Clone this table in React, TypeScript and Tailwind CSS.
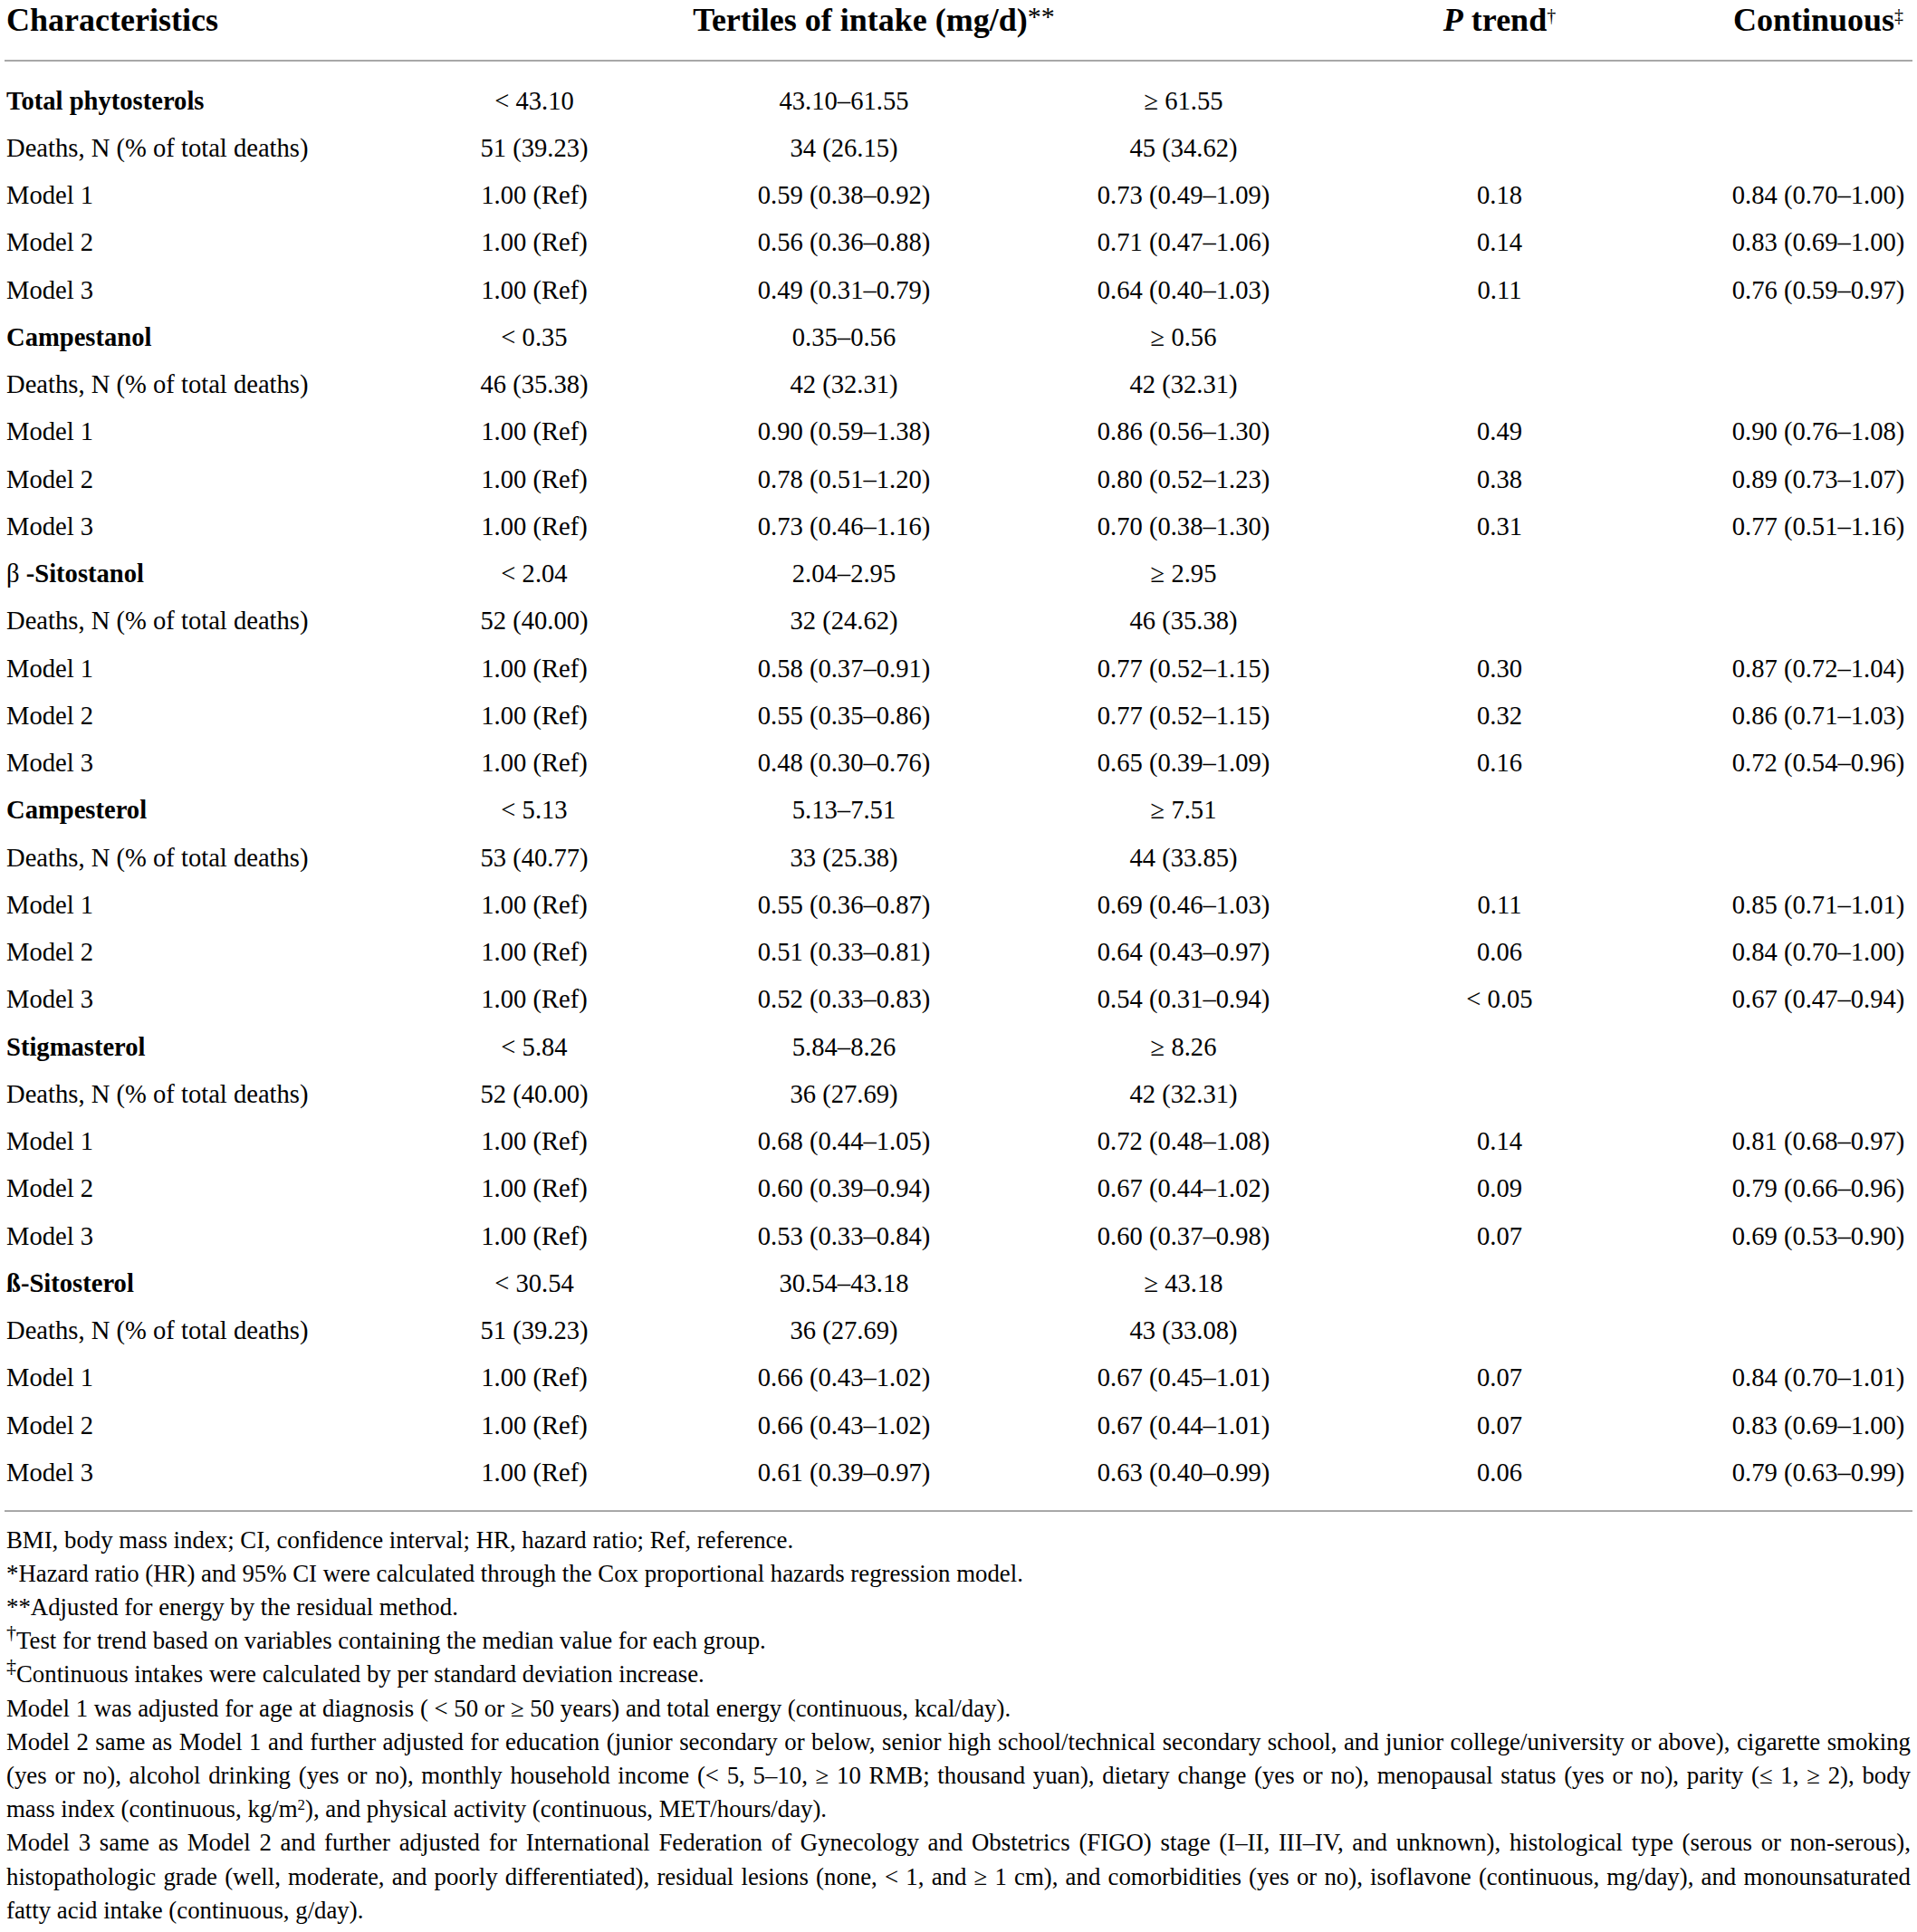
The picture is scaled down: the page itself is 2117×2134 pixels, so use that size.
import React from "react";

type Row = { label: React.ReactNode; bold?: boolean; cells: string[] };

const groups: { name: React.ReactNode; ranges: string[]; deaths: string[]; models: string[][] }[] = [
  {
    name: <span className="font-bold">Total phytosterols</span>,
    ranges: ["< 43.10", "43.10–61.55", "≥ 61.55"],
    deaths: ["51 (39.23)", "34 (26.15)", "45 (34.62)"],
    models: [
      ["0.59 (0.38–0.92)", "0.73 (0.49–1.09)", "0.18", "0.84 (0.70–1.00)"],
      ["0.56 (0.36–0.88)", "0.71 (0.47–1.06)", "0.14", "0.83 (0.69–1.00)"],
      ["0.49 (0.31–0.79)", "0.64 (0.40–1.03)", "0.11", "0.76 (0.59–0.97)"],
    ],
  },
  {
    name: <span className="font-bold">Campestanol</span>,
    ranges: ["< 0.35", "0.35–0.56", "≥ 0.56"],
    deaths: ["46 (35.38)", "42 (32.31)", "42 (32.31)"],
    models: [
      ["0.90 (0.59–1.38)", "0.86 (0.56–1.30)", "0.49", "0.90 (0.76–1.08)"],
      ["0.78 (0.51–1.20)", "0.80 (0.52–1.23)", "0.38", "0.89 (0.73–1.07)"],
      ["0.73 (0.46–1.16)", "0.70 (0.38–1.30)", "0.31", "0.77 (0.51–1.16)"],
    ],
  },
  {
    name: (
      <span>
        β <span className="font-bold">-Sitostanol</span>
      </span>
    ),
    ranges: ["< 2.04", "2.04–2.95", "≥ 2.95"],
    deaths: ["52 (40.00)", "32 (24.62)", "46 (35.38)"],
    models: [
      ["0.58 (0.37–0.91)", "0.77 (0.52–1.15)", "0.30", "0.87 (0.72–1.04)"],
      ["0.55 (0.35–0.86)", "0.77 (0.52–1.15)", "0.32", "0.86 (0.71–1.03)"],
      ["0.48 (0.30–0.76)", "0.65 (0.39–1.09)", "0.16", "0.72 (0.54–0.96)"],
    ],
  },
  {
    name: <span className="font-bold">Campesterol</span>,
    ranges: ["< 5.13", "5.13–7.51", "≥ 7.51"],
    deaths: ["53 (40.77)", "33 (25.38)", "44 (33.85)"],
    models: [
      ["0.55 (0.36–0.87)", "0.69 (0.46–1.03)", "0.11", "0.85 (0.71–1.01)"],
      ["0.51 (0.33–0.81)", "0.64 (0.43–0.97)", "0.06", "0.84 (0.70–1.00)"],
      ["0.52 (0.33–0.83)", "0.54 (0.31–0.94)", "< 0.05", "0.67 (0.47–0.94)"],
    ],
  },
  {
    name: <span className="font-bold">Stigmasterol</span>,
    ranges: ["< 5.84", "5.84–8.26", "≥ 8.26"],
    deaths: ["52 (40.00)", "36 (27.69)", "42 (32.31)"],
    models: [
      ["0.68 (0.44–1.05)", "0.72 (0.48–1.08)", "0.14", "0.81 (0.68–0.97)"],
      ["0.60 (0.39–0.94)", "0.67 (0.44–1.02)", "0.09", "0.79 (0.66–0.96)"],
      ["0.53 (0.33–0.84)", "0.60 (0.37–0.98)", "0.07", "0.69 (0.53–0.90)"],
    ],
  },
  {
    name: <span className="font-bold">ß-Sitosterol</span>,
    ranges: ["< 30.54", "30.54–43.18", "≥ 43.18"],
    deaths: ["51 (39.23)", "36 (27.69)", "43 (33.08)"],
    models: [
      ["0.66 (0.43–1.02)", "0.67 (0.45–1.01)", "0.07", "0.84 (0.70–1.01)"],
      ["0.66 (0.43–1.02)", "0.67 (0.44–1.01)", "0.07", "0.83 (0.69–1.00)"],
      ["0.61 (0.39–0.97)", "0.63 (0.40–0.99)", "0.06", "0.79 (0.63–0.99)"],
    ],
  },
];

const rows: Row[] = [];
groups.forEach((g) => {
  rows.push({ label: g.name, cells: [...g.ranges, "", ""] });
  rows.push({ label: "Deaths, N (% of total deaths)", cells: [...g.deaths, "", ""] });
  g.models.forEach((m, i) => {
    rows.push({ label: `Model ${i + 1}`, cells: ["1.00 (Ref)", ...m] });
  });
});

const gridCols = "grid grid-cols-[517px_136px_548px_202px_496px_208px]";

function JLine({ children }: { children: React.ReactNode }) {
  return <div className="whitespace-nowrap text-justify [text-align-last:justify]">{children}</div>;
}

export default function App() {
  return (
    <div className="w-[2117px] min-h-[2134px] bg-white text-black font-['Liberation_Serif','Times_New_Roman',serif]">
      <div className="px-[5px]">
        {/* Header */}
        <div className={`${gridCols} h-[66px] text-[36px] leading-[44px] font-bold`}>
          <div className="pl-[2px] whitespace-nowrap">Characteristics</div>
          <div className="col-span-3 text-center whitespace-nowrap">
            Tertiles of intake (mg/d)<span className="relative top-[-6px] text-[30px] font-normal">**</span>
          </div>
          <div className="text-center whitespace-nowrap">
            <span className="italic">P</span> trend
            <sup className="text-[20px] font-normal">†</sup>
          </div>
          <div className="text-center whitespace-nowrap">
            Continuous<sup className="text-[20px] font-normal">‡</sup>
          </div>
        </div>
        <div className="h-[2px] bg-[#a8a8a8]" />

        {/* Body */}
        <div className={`${gridCols} auto-rows-[52.25px] pt-[18px] text-[28.6px]`}>
          {rows.map((r, i) => (
            <React.Fragment key={i}>
              <div className="flex items-center pl-[2px] whitespace-nowrap">{r.label}</div>
              {r.cells.map((c, j) => (
                <div key={j} className="flex items-center justify-center whitespace-nowrap">
                  {c}
                </div>
              ))}
            </React.Fragment>
          ))}
        </div>
        <div className="mt-[14px] h-[2px] bg-[#a8a8a8]" />

        {/* Footnotes */}
        <div className="pt-[13px] pl-[2px] pr-[2px] text-[26.8px] leading-[37.2px]">
          <div className="whitespace-nowrap">BMI, body mass index; CI, confidence interval; HR, hazard ratio; Ref, reference.</div>
          <div className="whitespace-nowrap">
            *Hazard ratio (HR) and 95% CI were calculated through the Cox proportional hazards regression model.
          </div>
          <div className="whitespace-nowrap">**Adjusted for energy by the residual method.</div>
          <div className="whitespace-nowrap">
            <sup className="text-[22px]">†</sup>Test for trend based on variables containing the median value for each group.
          </div>
          <div className="whitespace-nowrap">
            <sup className="text-[22px]">‡</sup>Continuous intakes were calculated by per standard deviation increase.
          </div>
          <div className="whitespace-nowrap">
            Model 1 was adjusted for age at diagnosis ( &lt; 50 or ≥ 50 years) and total energy (continuous, kcal/day).
          </div>
          <JLine>
            Model 2 same as Model 1 and further adjusted for education (junior secondary or below, senior high school/technical secondary school, and junior college/university or above), cigarette smoking
          </JLine>
          <JLine>
            (yes or no), alcohol drinking (yes or no), monthly household income (&lt; 5, 5–10, ≥ 10 RMB; thousand yuan), dietary change (yes or no), menopausal status (yes or no), parity (≤ 1, ≥ 2), body
          </JLine>
          <div className="whitespace-nowrap">
            mass index (continuous, kg/m<sup className="text-[17px]">2</sup>), and physical activity (continuous, MET/hours/day).
          </div>
          <JLine>
            Model 3 same as Model 2 and further adjusted for International Federation of Gynecology and Obstetrics (FIGO) stage (I–II, III–IV, and unknown), histological type (serous or non-serous),
          </JLine>
          <JLine>
            histopathologic grade (well, moderate, and poorly differentiated), residual lesions (none, &lt; 1, and ≥ 1 cm), and comorbidities (yes or no), isoflavone (continuous, mg/day), and monounsaturated
          </JLine>
          <div className="whitespace-nowrap">fatty acid intake (continuous, g/day).</div>
        </div>
      </div>
    </div>
  );
}
